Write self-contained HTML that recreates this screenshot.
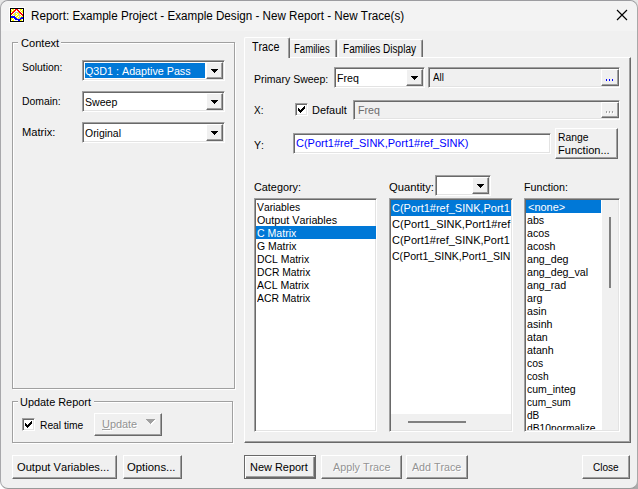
<!DOCTYPE html>
<html><head><meta charset='utf-8'><title>Report</title><style>
html,body{margin:0;padding:0;}
body{width:638px;height:489px;overflow:hidden;background:#e6e6e6;position:relative;font-family:"Liberation Sans",sans-serif;}
#win{position:absolute;left:0;top:0;width:636px;height:487px;border:1px solid #9c9ca0;border-left-color:#a8a8ab;border-right-color:#a8a8a8;border-bottom-color:#999;border-radius:8px;background:#f0f0f0;overflow:hidden;}
#root{position:absolute;left:-1px;top:-1px;width:638px;height:489px;}
#root div, #root span.t, #root i, #root svg{position:absolute;box-sizing:border-box;}
.t{white-space:pre;transform-origin:0 0;font-kerning:none;}
.px i{display:block;height:1px;}
.btn{background:#f0f0f0;border-top:1px solid #fff;border-left:1px solid #fff;border-right:1px solid #696969;border-bottom:1px solid #696969;box-shadow:inset -1px -1px 0 #a0a0a0;}
.btn.dflt{border:1px solid #696969;box-shadow:inset 1px 1px 0 #fff, inset -1px -1px 0 #696969, inset -2px -2px 0 #a0a0a0;}
.sunk{border-top:1px solid #a0a0a0;border-left:1px solid #a0a0a0;border-right:1px solid #fff;border-bottom:1px solid #fff;box-shadow:inset 1px 1px 0 #696969, inset -1px -1px 0 #e3e3e3;}
.grp{border:1px solid #a0a0a0;box-shadow:1px 1px 0 #fff, inset 1px 1px 0 #fff;}
.panel{border-top:1px solid #fff;border-left:1px solid #fff;border-right:1px solid #696969;border-bottom:1px solid #696969;box-shadow:inset -1px -1px 0 #a0a0a0;background:#f0f0f0;}
.tab{border-top:1px solid #fff;border-left:1px solid #fff;border-right:1px solid #696969;box-shadow:inset -1px 0 0 #a0a0a0;background:#f0f0f0;border-radius:2px 2px 0 0;}
.tab.act{}
</style></head><body><div class='corner' style='position:absolute;left:0;top:470px;width:20px;height:19px;background:#fff'></div><div class='corner' style='position:absolute;left:618px;top:470px;width:20px;height:19px;background:#aaa'></div><div id='win'><div id='root'><div class='abs' style='left:1px;top:1px;width:636px;height:30px;background:#f3f3f3;border-radius:7px 7px 0 0;'></div><svg class='abs' style='left:9px;top:7px' width='16' height='16' viewBox='0 0 16 16' shape-rendering='crispEdges'><rect x='0' y='0' width='16' height='16' fill='#fff'/><rect x='1' y='1' width='14' height='14' fill='#000'/><rect x='2' y='2' width='12' height='12' fill='#fff'/><rect x='3' y='2' width='2' height='1' fill='#ff0'/><rect x='6' y='2' width='3' height='1' fill='#f00'/><rect x='11' y='2' width='2' height='1' fill='#ff0'/><rect x='2' y='3' width='1' height='1' fill='#ff0'/><rect x='4' y='3' width='1' height='1' fill='#ff0'/><rect x='5' y='3' width='2' height='1' fill='#f00'/><rect x='8' y='3' width='2' height='1' fill='#f00'/><rect x='11' y='3' width='1' height='1' fill='#ff0'/><rect x='13' y='3' width='1' height='1' fill='#ff0'/><rect x='2' y='4' width='2' height='1' fill='#ff0'/><rect x='4' y='4' width='2' height='1' fill='#f00'/><rect x='9' y='4' width='2' height='1' fill='#f00'/><rect x='12' y='4' width='2' height='1' fill='#ff0'/><rect x='3' y='5' width='2' height='1' fill='#f00'/><rect x='6' y='5' width='4' height='1' fill='#c0c0c0'/><rect x='10' y='5' width='2' height='1' fill='#f00'/><rect x='13' y='5' width='1' height='1' fill='#ff0'/><rect x='2' y='6' width='2' height='1' fill='#f00'/><rect x='5' y='6' width='1' height='1' fill='#c0c0c0'/><rect x='6' y='6' width='1' height='1' fill='#ff0'/><rect x='8' y='6' width='2' height='1' fill='#ff0'/><rect x='10' y='6' width='1' height='1' fill='#c0c0c0'/><rect x='11' y='6' width='2' height='1' fill='#f00'/><rect x='2' y='7' width='1' height='1' fill='#f00'/><rect x='4' y='7' width='1' height='1' fill='#ff0'/><rect x='5' y='7' width='1' height='1' fill='#c0c0c0'/><rect x='6' y='7' width='2' height='1' fill='#ff0'/><rect x='9' y='7' width='1' height='1' fill='#ff0'/><rect x='10' y='7' width='1' height='1' fill='#c0c0c0'/><rect x='12' y='7' width='2' height='1' fill='#f00'/><rect x='3' y='8' width='1' height='1' fill='#ff0'/><rect x='5' y='8' width='1' height='1' fill='#c0c0c0'/><rect x='6' y='8' width='1' height='1' fill='#ff0'/><rect x='8' y='8' width='2' height='1' fill='#ff0'/><rect x='10' y='8' width='1' height='1' fill='#c0c0c0'/><rect x='11' y='8' width='1' height='1' fill='#ff0'/><rect x='13' y='8' width='1' height='1' fill='#f00'/><rect x='2' y='9' width='4' height='1' fill='#00f'/><rect x='7' y='9' width='2' height='1' fill='#ff0'/><rect x='10' y='9' width='1' height='1' fill='#c0c0c0'/><rect x='12' y='9' width='2' height='1' fill='#ff0'/><rect x='2' y='10' width='5' height='1' fill='#00f'/><rect x='7' y='10' width='1' height='1' fill='#ff0'/><rect x='9' y='10' width='1' height='1' fill='#ff0'/><rect x='10' y='10' width='1' height='1' fill='#c0c0c0'/><rect x='11' y='10' width='1' height='1' fill='#ff0'/><rect x='12' y='10' width='2' height='1' fill='#00f'/><rect x='2' y='11' width='2' height='1' fill='#ff0'/><rect x='5' y='11' width='3' height='1' fill='#00f'/><rect x='8' y='11' width='1' height='1' fill='#c0c0c0'/><rect x='9' y='11' width='1' height='1' fill='#ff0'/><rect x='10' y='11' width='1' height='1' fill='#c0c0c0'/><rect x='11' y='11' width='3' height='1' fill='#00f'/><rect x='2' y='12' width='1' height='1' fill='#ff0'/><rect x='4' y='12' width='1' height='1' fill='#ff0'/><rect x='6' y='12' width='6' height='1' fill='#00f'/><rect x='12' y='12' width='1' height='1' fill='#ff0'/><rect x='3' y='13' width='2' height='1' fill='#ff0'/><rect x='9' y='13' width='2' height='1' fill='#00f'/><rect x='11' y='13' width='2' height='1' fill='#ff0'/></svg><span class='t' style='left:30.50px;top:9px;font-size:12px;line-height:14px;color:#000;transform:scaleX(0.9697);'>Report: Example Project - Example Design - New Report - New Trace(s)</span><svg class='abs' style='left:616px;top:9px' width='12' height='12' viewBox='0 0 12 12'><path d='M1 1 L11 11 M11 1 L1 11' stroke='#000' stroke-width='1.15' fill='none'/></svg><div class='grp' style='left:12px;top:42px;width:223px;height:347px;'></div><div class='abs' style='left:18px;top:42px;width:43px;height:2px;background:#f0f0f0;'></div><span class='t' style='left:20.60px;top:36px;font-size:11.6px;line-height:14px;color:#000;transform:scaleX(0.9557);'>Context</span><span class='t' style='left:21.50px;top:60px;font-size:11.6px;line-height:14px;color:#000;transform:scaleX(0.8975);'>Solution:</span><span class='t' style='left:21.70px;top:94px;font-size:11.6px;line-height:14px;color:#000;transform:scaleX(0.8964);'>Domain:</span><span class='t' style='left:21.70px;top:125px;font-size:11.6px;line-height:14px;color:#000;transform:scaleX(0.9603);'>Matrix:</span><div class='sunk' style='left:82px;top:60px;width:143px;height:21px;background:#fff;'></div><div class='btn' style='left:206px;top:62px;width:17px;height:17px;'></div><div class='px'><i style='left:211px;top:69px;width:7px;background:#000'></i><i style='left:212px;top:70px;width:5px;background:#000'></i><i style='left:213px;top:71px;width:3px;background:#000'></i><i style='left:214px;top:72px;width:1px;background:#000'></i></div><div class='abs' style='left:85px;top:63px;width:120px;height:15px;background:#0078d7;'></div><span class='t' style='left:85.30px;top:64px;font-size:11.6px;line-height:14px;color:#fff;transform:scaleX(0.9256);'>Q3D1 : Adaptive Pass</span><div class='sunk' style='left:82px;top:91px;width:143px;height:21px;background:#fff;'></div><div class='btn' style='left:206px;top:93px;width:17px;height:17px;'></div><div class='px'><i style='left:211px;top:100px;width:7px;background:#000'></i><i style='left:212px;top:101px;width:5px;background:#000'></i><i style='left:213px;top:102px;width:3px;background:#000'></i><i style='left:214px;top:103px;width:1px;background:#000'></i></div><span class='t' style='left:85.30px;top:95px;font-size:11.6px;line-height:14px;color:#000;transform:scaleX(0.9139);'>Sweep</span><div class='sunk' style='left:82px;top:122px;width:143px;height:21px;background:#fff;'></div><div class='btn' style='left:206px;top:124px;width:17px;height:17px;'></div><div class='px'><i style='left:211px;top:131px;width:7px;background:#000'></i><i style='left:212px;top:132px;width:5px;background:#000'></i><i style='left:213px;top:133px;width:3px;background:#000'></i><i style='left:214px;top:134px;width:1px;background:#000'></i></div><span class='t' style='left:85.30px;top:126px;font-size:11.6px;line-height:14px;color:#000;transform:scaleX(0.9011);'>Original</span><div class='grp' style='left:12px;top:401px;width:221px;height:42px;'></div><div class='abs' style='left:18px;top:401px;width:76px;height:2px;background:#f0f0f0;'></div><span class='t' style='left:20.30px;top:395px;font-size:11.6px;line-height:14px;color:#000;transform:scaleX(0.9416);'>Update Report</span><div class='sunk' style='left:22px;top:418px;width:13px;height:13px;background:#fff;'></div><div class='px'><i style='left:25px;top:423px;width:1px;height:3px;background:#000'></i><i style='left:26px;top:424px;width:1px;height:3px;background:#000'></i><i style='left:27px;top:425px;width:1px;height:3px;background:#000'></i><i style='left:28px;top:424px;width:1px;height:3px;background:#000'></i><i style='left:29px;top:423px;width:1px;height:3px;background:#000'></i><i style='left:30px;top:422px;width:1px;height:3px;background:#000'></i><i style='left:31px;top:421px;width:1px;height:3px;background:#000'></i></div><span class='t' style='left:39.50px;top:418px;font-size:11.6px;line-height:14px;color:#000;transform:scaleX(0.8842);'>Real time</span><div class='btn' style='left:94px;top:413px;width:68px;height:23px;'></div><span class='t' style='left:102.00px;top:417px;font-size:11.6px;line-height:14px;color:#939393;transform:scaleX(0.9414);text-shadow:1px 1px 0 #fff;'>Update</span><div class='abs' style='left:102px;top:429px;width:8px;height:1px;background:#a0a0a0;box-shadow:1px 1px 0 #fff;'></div><div class='px'><i style='left:147px;top:420px;width:9px;background:#fff'></i><i style='left:148px;top:421px;width:7px;background:#fff'></i><i style='left:149px;top:422px;width:5px;background:#fff'></i><i style='left:150px;top:423px;width:3px;background:#fff'></i><i style='left:151px;top:424px;width:1px;background:#fff'></i><i style='left:146px;top:419px;width:9px;background:#a0a0a0'></i><i style='left:147px;top:420px;width:7px;background:#a0a0a0'></i><i style='left:148px;top:421px;width:5px;background:#a0a0a0'></i><i style='left:149px;top:422px;width:3px;background:#a0a0a0'></i><i style='left:150px;top:423px;width:1px;background:#a0a0a0'></i></div><div class='btn' style='left:12px;top:455px;width:105px;height:24px;'></div><span class='t' style='left:17.40px;top:460px;font-size:11.6px;line-height:14px;color:#000;transform:scaleX(0.9604);'>Output Variables...</span><div class='btn' style='left:123px;top:455px;width:59px;height:24px;'></div><span class='t' style='left:126.90px;top:460px;font-size:11.6px;line-height:14px;color:#000;transform:scaleX(0.9773);'>Options...</span><div class='panel' style='left:244px;top:57px;width:387px;height:386px;'></div><div class='tab' style='left:289px;top:39px;width:48px;height:18px;'></div><span class='t' style='left:294.20px;top:42px;font-size:12px;line-height:14px;color:#000;transform:scaleX(0.7992);'>Families</span><div class='tab' style='left:338px;top:39px;width:85px;height:18px;'></div><span class='t' style='left:343.30px;top:42px;font-size:12px;line-height:14px;color:#000;transform:scaleX(0.8356);'>Families Display</span><div class='tab act' style='left:244px;top:37px;width:46px;height:21px;'></div><span class='t' style='left:252.00px;top:40px;font-size:12px;line-height:14px;color:#000;transform:scaleX(0.8930);'>Trace</span><span class='t' style='left:253.50px;top:72px;font-size:11.6px;line-height:14px;color:#000;transform:scaleX(0.9068);'>Primary Sweep:</span><div class='sunk' style='left:334px;top:67px;width:91px;height:21px;background:#fff;'></div><div class='btn' style='left:406px;top:69px;width:17px;height:17px;'></div><div class='px'><i style='left:411px;top:76px;width:7px;background:#000'></i><i style='left:412px;top:77px;width:5px;background:#000'></i><i style='left:413px;top:78px;width:3px;background:#000'></i><i style='left:414px;top:79px;width:1px;background:#000'></i></div><span class='t' style='left:337.30px;top:71px;font-size:11.6px;line-height:14px;color:#000;transform:scaleX(0.9143);'>Freq</span><div class='sunk' style='left:428px;top:67px;width:192px;height:21px;background:#f0f0f0;'></div><span class='t' style='left:433.40px;top:70px;font-size:11.6px;line-height:14px;color:#000;transform:scaleX(0.8378);'>All</span><div class='btn' style='left:601px;top:69px;width:18px;height:17px;'></div><div class='px'><i style='left:606px;top:79px;width:1px;height:2px;background:#00f'></i><i style='left:609px;top:79px;width:1px;height:2px;background:#00f'></i><i style='left:612px;top:79px;width:1px;height:2px;background:#00f'></i></div><span class='t' style='left:253.60px;top:103px;font-size:11.6px;line-height:14px;color:#000;transform:scaleX(0.8570);'>X:</span><div class='sunk' style='left:295px;top:103px;width:13px;height:13px;background:#fff;'></div><div class='px'><i style='left:298px;top:108px;width:1px;height:3px;background:#000'></i><i style='left:299px;top:109px;width:1px;height:3px;background:#000'></i><i style='left:300px;top:110px;width:1px;height:3px;background:#000'></i><i style='left:301px;top:109px;width:1px;height:3px;background:#000'></i><i style='left:302px;top:108px;width:1px;height:3px;background:#000'></i><i style='left:303px;top:107px;width:1px;height:3px;background:#000'></i><i style='left:304px;top:106px;width:1px;height:3px;background:#000'></i></div><span class='t' style='left:312.40px;top:103px;font-size:11.6px;line-height:14px;color:#000;transform:scaleX(0.9446);'>Default</span><div class='sunk' style='left:353px;top:100px;width:267px;height:20px;background:#f0f0f0;'></div><span class='t' style='left:358.30px;top:103px;font-size:11.6px;line-height:14px;color:#6d6d6d;transform:scaleX(0.9143);'>Freq</span><div class='btn' style='left:601px;top:102px;width:18px;height:16px;'></div><div class='px'><i style='left:606px;top:111px;width:1px;height:2px;background:#a0a0a0;box-shadow:1px 1px 0 #fff'></i><i style='left:609px;top:111px;width:1px;height:2px;background:#a0a0a0;box-shadow:1px 1px 0 #fff'></i><i style='left:612px;top:111px;width:1px;height:2px;background:#a0a0a0;box-shadow:1px 1px 0 #fff'></i></div><span class='t' style='left:253.60px;top:138px;font-size:11.6px;line-height:14px;color:#000;transform:scaleX(0.9101);'>Y:</span><div class='sunk' style='left:293px;top:133px;width:258px;height:21px;background:#fff;'></div><span class='t' style='left:296.00px;top:136px;font-size:11.6px;line-height:14px;color:#00f;transform:scaleX(0.9493);'>C(Port1#ref_SINK,Port1#ref_SINK)</span><div class='btn' style='left:555px;top:128px;width:63px;height:31px;'></div><span class='t' style='left:558.10px;top:130px;font-size:11.6px;line-height:14px;color:#000;transform:scaleX(0.8925);'>Range</span><span class='t' style='left:558.10px;top:143px;font-size:11.6px;line-height:14px;color:#000;transform:scaleX(0.9549);'>Function...</span><span class='t' style='left:254.20px;top:180px;font-size:11.6px;line-height:14px;color:#000;transform:scaleX(0.9350);'>Category:</span><span class='t' style='left:388.80px;top:180px;font-size:11.6px;line-height:14px;color:#000;transform:scaleX(0.9697);'>Quantity:</span><span class='t' style='left:523.50px;top:180px;font-size:11.6px;line-height:14px;color:#000;transform:scaleX(0.9224);'>Function:</span><div class='sunk' style='left:435px;top:175px;width:56px;height:21px;background:#fff;'></div><div class='btn' style='left:472px;top:177px;width:17px;height:17px;'></div><div class='px'><i style='left:477px;top:184px;width:7px;background:#000'></i><i style='left:478px;top:185px;width:5px;background:#000'></i><i style='left:479px;top:186px;width:3px;background:#000'></i><i style='left:480px;top:187px;width:1px;background:#000'></i></div><div class='sunk' style='left:254px;top:198px;width:123px;height:234px;background:#fff;'></div><span class='t' style='left:257.20px;top:200px;font-size:11.6px;line-height:14px;color:#000;transform:scaleX(0.8908);'>Variables</span><span class='t' style='left:257.20px;top:213px;font-size:11.6px;line-height:14px;color:#000;transform:scaleX(0.9275);'>Output Variables</span><div class='abs' style='left:256px;top:226px;width:120px;height:13px;background:#0078d7;'></div><span class='t' style='left:257.20px;top:226px;font-size:11.6px;line-height:14px;color:#fff;transform:scaleX(0.9106);'>C Matrix</span><span class='t' style='left:257.20px;top:239px;font-size:11.6px;line-height:14px;color:#000;transform:scaleX(0.9016);'>G Matrix</span><span class='t' style='left:257.20px;top:252px;font-size:11.6px;line-height:14px;color:#000;transform:scaleX(0.8984);'>DCL Matrix</span><span class='t' style='left:257.20px;top:265px;font-size:11.6px;line-height:14px;color:#000;transform:scaleX(0.8897);'>DCR Matrix</span><span class='t' style='left:257.20px;top:278px;font-size:11.6px;line-height:14px;color:#000;transform:scaleX(0.9085);'>ACL Matrix</span><span class='t' style='left:257.20px;top:291px;font-size:11.6px;line-height:14px;color:#000;transform:scaleX(0.8993);'>ACR Matrix</span><div class='sunk' style='left:389px;top:198px;width:124px;height:234px;background:#fff;'></div><div class='abs' style='left:391px;top:200px;width:120px;height:16px;background:#0078d7;'></div><div class='abs' style='left:391px;top:414px;width:120px;height:16px;background:#f0f0f0;'></div><div class='abs' style='left:408px;top:421px;width:58px;height:2px;background:#808080;'></div><div class='abs' style='left:391px;top:200px;width:120px;height:64px;overflow:hidden'><span class='t' style='left:1.10px;top:1px;font-size:11.6px;line-height:14px;color:#fff;transform:scaleX(0.9471);'>C(Port1#ref_SINK,Port1</span><span class='t' style='left:1.10px;top:17px;font-size:11.6px;line-height:14px;color:#000;transform:scaleX(0.9512);'>C(Port1_SINK,Port1#ref</span><span class='t' style='left:1.10px;top:33px;font-size:11.6px;line-height:14px;color:#000;transform:scaleX(0.9471);'>C(Port1#ref_SINK,Port1</span><span class='t' style='left:1.10px;top:49px;font-size:11.6px;line-height:14px;color:#000;transform:scaleX(0.9103);'>C(Port1_SINK,Port1_SIN</span></div><div class='sunk' style='left:524px;top:198px;width:96px;height:234px;background:#fff;'></div><div class='abs' style='left:602px;top:200px;width:16px;height:230px;background:#f0f0f0;'></div><div class='abs' style='left:609px;top:217px;width:2px;height:71px;background:#808080;'></div><div class='abs' style='left:526px;top:200px;width:75px;height:13px;background:#0078d7;'></div><div class='abs' style='left:526px;top:200px;width:75px;height:230px;overflow:hidden'><span class='t' style='left:2.40px;top:0px;font-size:11.6px;line-height:14px;color:#fff;transform:scaleX(0.9455);'>&lt;none&gt;</span><span class='t' style='left:1.10px;top:13px;font-size:11.6px;line-height:14px;color:#000;transform:scaleX(0.9198);'>abs</span><span class='t' style='left:1.10px;top:26px;font-size:11.6px;line-height:14px;color:#000;transform:scaleX(0.9198);'>acos</span><span class='t' style='left:1.10px;top:39px;font-size:11.6px;line-height:14px;color:#000;transform:scaleX(0.9198);'>acosh</span><span class='t' style='left:1.10px;top:52px;font-size:11.6px;line-height:14px;color:#000;transform:scaleX(0.9198);'>ang_deg</span><span class='t' style='left:1.10px;top:65px;font-size:11.6px;line-height:14px;color:#000;transform:scaleX(0.9198);'>ang_deg_val</span><span class='t' style='left:1.10px;top:78px;font-size:11.6px;line-height:14px;color:#000;transform:scaleX(0.9198);'>ang_rad</span><span class='t' style='left:1.10px;top:91px;font-size:11.6px;line-height:14px;color:#000;transform:scaleX(0.9198);'>arg</span><span class='t' style='left:1.10px;top:104px;font-size:11.6px;line-height:14px;color:#000;transform:scaleX(0.9198);'>asin</span><span class='t' style='left:1.10px;top:117px;font-size:11.6px;line-height:14px;color:#000;transform:scaleX(0.9198);'>asinh</span><span class='t' style='left:1.10px;top:130px;font-size:11.6px;line-height:14px;color:#000;transform:scaleX(0.9198);'>atan</span><span class='t' style='left:1.10px;top:143px;font-size:11.6px;line-height:14px;color:#000;transform:scaleX(0.9198);'>atanh</span><span class='t' style='left:1.10px;top:156px;font-size:11.6px;line-height:14px;color:#000;transform:scaleX(0.8977);'>cos</span><span class='t' style='left:1.10px;top:169px;font-size:11.6px;line-height:14px;color:#000;transform:scaleX(0.8816);'>cosh</span><span class='t' style='left:1.10px;top:182px;font-size:11.6px;line-height:14px;color:#000;transform:scaleX(0.9084);'>cum_integ</span><span class='t' style='left:1.10px;top:195px;font-size:11.6px;line-height:14px;color:#000;transform:scaleX(0.8714);'>cum_sum</span><span class='t' style='left:1.10px;top:208px;font-size:11.6px;line-height:14px;color:#000;transform:scaleX(0.8670);'>dB</span><span class='t' style='left:1.10px;top:221px;font-size:11.6px;line-height:14px;color:#000;transform:scaleX(0.8869);'>dB10normalize</span></div><div class='btn dflt' style='left:244px;top:455px;width:72px;height:24px;'></div><span class='t' style='left:250.20px;top:460px;font-size:11.6px;line-height:14px;color:#000;transform:scaleX(0.9442);'>New Report</span><div class='btn' style='left:321px;top:455px;width:81px;height:24px;'></div><span class='t' style='left:332.60px;top:460px;font-size:11.6px;line-height:14px;color:#939393;transform:scaleX(0.9278);text-shadow:1px 1px 0 #fff;'>Apply Trace</span><div class='btn' style='left:406px;top:455px;width:62px;height:24px;'></div><span class='t' style='left:411.80px;top:460px;font-size:11.6px;line-height:14px;color:#939393;transform:scaleX(0.9213);text-shadow:1px 1px 0 #fff;'>Add Trace</span><div class='btn' style='left:582px;top:455px;width:48px;height:24px;'></div><span class='t' style='left:593.30px;top:460px;font-size:11.6px;line-height:14px;color:#000;transform:scaleX(0.8666);'>Close</span></div></div></body></html>
